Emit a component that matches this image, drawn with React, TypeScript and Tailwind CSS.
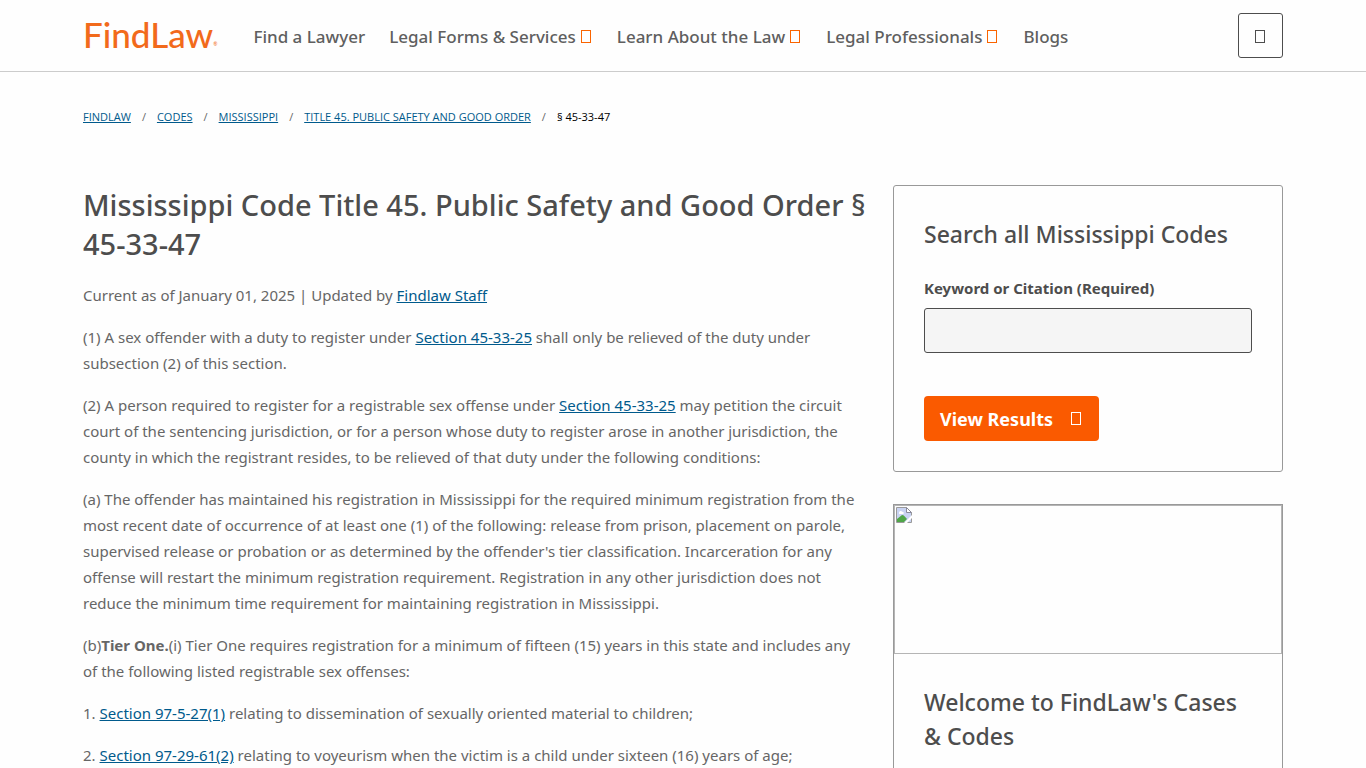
import type { ReactNode } from "react";

interface NavItem {
  label: string;
  hasMenu?: boolean;
}

const NAV_ITEMS: NavItem[] = [
  { label: "Find a Lawyer" },
  { label: "Legal Forms & Services", hasMenu: true },
  { label: "Learn About the Law", hasMenu: true },
  { label: "Legal Professionals", hasMenu: true },
  { label: "Blogs" },
];

const CRUMBS = ["FindLaw", "Codes", "Mississippi", "Title 45. Public Safety and Good Order"];

export default function App() {
  return (
    <div className="h-screen overflow-hidden bg-[#fefefe] font-['Noto_Sans','Open_Sans',sans-serif] text-[15px] leading-[26px] text-[#666]">
      <Header />
      <div className="mx-auto max-w-[1200px]">
        <Breadcrumbs />
        <div className="mt-[60px] grid grid-cols-[minmax(0,1fr)_390px] items-start gap-6">
          <CodeSection />
          <aside className="space-y-8">
            <SearchCard />
            <WelcomeCard />
          </aside>
        </div>
      </div>
    </div>
  );
}

function Header() {
  return (
    <header className="border-b border-[#ccc]">
      <div className="mx-auto flex h-[71px] max-w-[1200px] items-center">
        <a
          href="#"
          className="mr-9 flex items-end pb-1 font-[Lato,sans-serif] text-[35px] leading-10 font-medium text-[#f26a1b]"
        >
          FindLaw
          <span className="text-[5px] leading-5">®</span>
        </a>
        <nav className="flex flex-1 items-center gap-6 pt-0.5 text-[17px] font-medium text-[#5f5f5f]">
          {NAV_ITEMS.map((item) =>
            item.hasMenu ? (
              <button key={item.label} type="button" className="flex items-center gap-[5px] whitespace-nowrap">
                {item.label}
                <Glyph className="text-[#fa6400]" />
              </button>
            ) : (
              <a key={item.label} href="#" className="whitespace-nowrap">
                {item.label}
              </a>
            ),
          )}
        </nav>
        <button
          type="button"
          aria-label="Search"
          className="flex size-[45px] items-center justify-center rounded-[3px] border border-[#4d4d4d] pt-0.5"
        >
          <Glyph className="text-[#4d4d4d]" />
        </button>
      </div>
    </header>
  );
}

function Breadcrumbs() {
  return (
    <nav aria-label="Breadcrumb" className="pt-[37px]">
      <ol className="flex items-center font-['Open_Sans',sans-serif] text-[11px] leading-4">
        {CRUMBS.map((crumb) => (
          <li key={crumb} className="flex uppercase">
            <TextLink>{crumb}</TextLink>
            <span className="px-[11px]">/</span>
          </li>
        ))}
        <li className="text-black">§ 45-33-47</li>
      </ol>
    </nav>
  );
}

function CodeSection() {
  return (
    <main>
      <h1 className="mb-[19px] text-[29px] leading-[39px] font-medium text-[#4d4d4d]">
        Mississippi Code Title 45. Public Safety and Good Order § 45-33-47
      </h1>
      <div className="space-y-4 pr-2">
        <p>
          Current as of January 01, 2025 | Updated by <TextLink>Findlaw Staff</TextLink>
        </p>
        <p>
          (1) A sex offender with a duty to register under <TextLink>Section 45-33-25</TextLink> shall only be
          relieved of the duty under subsection (2) of this section.
        </p>
        <p>
          (2) A person required to register for a registrable sex offense under{" "}
          <TextLink>Section 45-33-25</TextLink> may petition the circuit court of the sentencing jurisdiction, or
          for a person whose duty to register arose in another jurisdiction, the county in which the registrant
          resides, to be relieved of that duty under the following conditions:
        </p>
        <p>
          (a) The offender has maintained his registration in Mississippi for the required minimum registration
          from the most recent date of occurrence of at least one (1) of the following: release from prison,
          placement on parole, supervised release or probation or as determined by the offender's tier
          classification. Incarceration for any offense will restart the minimum registration requirement.
          Registration in any other jurisdiction does not reduce the minimum time requirement for maintaining
          registration in Mississippi.
        </p>
        <p>
          (b)<b>Tier One.</b>(i) Tier One requires registration for a minimum of fifteen (15) years in this state
          and includes any of the following listed registrable sex offenses:
        </p>
        <p>
          1. <TextLink>Section 97-5-27(1)</TextLink> relating to dissemination of sexually oriented material to
          children;
        </p>
        <p>
          2. <TextLink>Section 97-29-61(2)</TextLink> relating to voyeurism when the victim is a child under
          sixteen (16) years of age;
        </p>
      </div>
    </main>
  );
}

function SearchCard() {
  return (
    <section className="rounded-[3px] border border-[#999] px-[30px] pt-[31px] pb-[30px]">
      <h2 className="mb-6 text-[23px] leading-[34px] font-medium text-[#4d4d4d]">Search all Mississippi Codes</h2>
      <form>
        <label htmlFor="keyword" className="block font-bold text-[#4d4d4d]">
          Keyword or Citation (Required)
        </label>
        <input
          id="keyword"
          type="text"
          className="mt-[7px] block h-[45px] w-full rounded-[3px] border border-[#4d4d4d] bg-[#f5f5f5] px-3"
        />
        <button
          type="button"
          className="mt-[43px] flex h-[45px] items-center gap-[18px] rounded-[4px] bg-[#fa5a00] px-4 text-[18px] font-bold text-white"
        >
          View Results
          <Glyph />
        </button>
      </form>
    </section>
  );
}

function WelcomeCard() {
  return (
    <section className="border border-[#999]">
      <div className="h-[149px] border border-[#b5b5b5] p-px">
        <BrokenImage />
      </div>
      <h2 className="px-[30px] pt-[31px] pb-[30px] text-[23px] leading-[34px] font-medium text-[#4d4d4d]">
        Welcome to FindLaw's Cases &amp; Codes
      </h2>
    </section>
  );
}

function TextLink({ children }: { children: ReactNode }) {
  return (
    <a href="#" className="text-[#005a8c] underline">
      {children}
    </a>
  );
}

/* Empty box of a missing icon glyph */
function Glyph({ className = "" }: { className?: string }) {
  return <span aria-hidden="true" className={`mr-0.5 h-[13px] w-[10px] border border-current ${className}`} />;
}

function BrokenImage() {
  return (
    <svg width="16" height="16" viewBox="0 0 16 16" aria-hidden="true">
      <path d="M.5.5h10l5 5v10H.5z" fill="#c9d3f2" stroke="#9a9a9a" />
      <path d="M10.5.5v5h5z" fill="#fff" stroke="#8a8a9a" />
      <path d="M3 6c0-1.500 1-2 2-2s1 1 2 1 1 2 0 2H4C3 7 3 6.500 3 6z" fill="#fff" />
      <path d="M1 15v-3l5-4c2 0 3 2 5 4l-3 3z" fill="#4fa648" />
      <path d="M8 16l8-8v3l-5 5z" fill="#fff" />
    </svg>
  );
}
